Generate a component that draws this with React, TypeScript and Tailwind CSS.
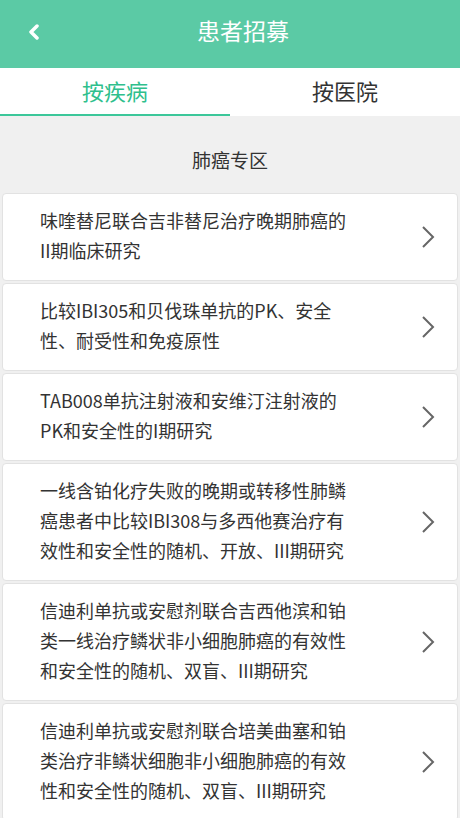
import React from "react";

const items = [
  "味喹替尼联合吉非替尼治疗晚期肺癌的II期临床研究",
  "比较IBI305和贝伐珠单抗的PK、安全性、耐受性和免疫原性",
  "TAB008单抗注射液和安维汀注射液的PK和安全性的I期研究",
  "一线含铂化疗失败的晚期或转移性肺鳞癌患者中比较IBI308与多西他赛治疗有效性和安全性的随机、开放、III期研究",
  "信迪利单抗或安慰剂联合吉西他滨和铂类一线治疗鳞状非小细胞肺癌的有效性和安全性的随机、双盲、III期研究",
  "信迪利单抗或安慰剂联合培美曲塞和铂类治疗非鳞状细胞非小细胞肺癌的有效性和安全性的随机、双盲、III期研究",
];

export default function App() {
  return (
    <div
      className="w-[460px] h-[818px] overflow-hidden bg-[#f0f0f0]"
      style={{ fontFamily: '"Noto Sans CJK SC", "Noto Sans", sans-serif' }}
    >
      <div className="h-[68px] bg-[#5bcaa5] flex items-center justify-center relative">
        <svg
          className="absolute left-[27px] top-[24px]"
          width="14"
          height="16"
          viewBox="0 0 14 16"
        >
          <polyline
            points="10,2 4,8 10,14"
            fill="none"
            stroke="#ffffff"
            strokeWidth="3.5"
            strokeLinecap="round"
            strokeLinejoin="round"
          />
        </svg>
        <span className="text-white text-[23px] leading-none -mt-[8px] ml-[26px]">患者招募</span>
      </div>
      <div className="h-[48px] bg-white flex">
        <div className="w-1/2 flex flex-col">
          <div className="flex-1 flex items-center justify-center text-[22px] leading-none text-[#2fbf8d] -mt-[3px]">
            按疾病
          </div>
          <div className="h-[2px] bg-[#3cc79a]" />
        </div>
        <div className="w-1/2 flex flex-col">
          <div className="flex-1 flex items-center justify-center text-[22px] leading-none text-[#333333] -mt-[3px]">
            按医院
          </div>
          <div className="h-[2px]" />
        </div>
      </div>
      <div className="pt-[30px] pb-[19px] text-center text-[19px] leading-[28px] text-[#333333]">
        肺癌专区
      </div>
      <div className="flex flex-col gap-[2px] px-[2px]">
        {items.map((t, i) => (
          <div
            key={i}
            className="bg-white border border-[#e2e2e2] rounded-[4px] flex items-center pl-[37px] pr-[22px] py-[13px]"
          >
            <div className="w-[308px] text-[18px] leading-[30px] text-[#333333] relative -top-[2px]">{t}</div>
            <div className="flex-1" />
            <svg width="14" height="24" viewBox="0 0 14 24">
              <polyline
                points="2,2 12,12 2,22"
                fill="none"
                stroke="#666666"
                strokeWidth="2"
              />
            </svg>
          </div>
        ))}
      </div>
    </div>
  );
}
